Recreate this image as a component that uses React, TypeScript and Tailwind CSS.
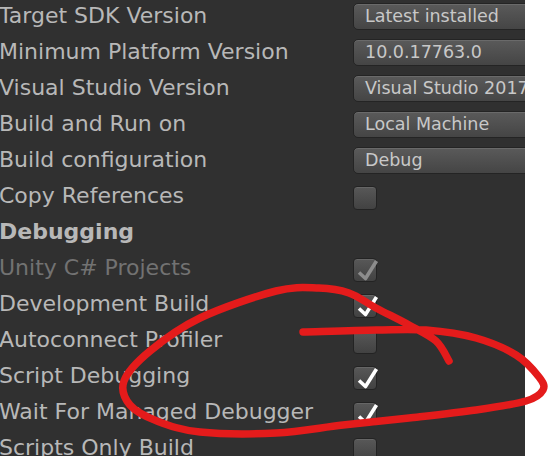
import React from "react";

type Row =
  | { kind: "select"; label: string; value: string }
  | { kind: "check"; label: string; checked: boolean; disabled?: boolean }
  | { kind: "header"; label: string };

const rows: Row[] = [
  { kind: "select", label: "Target SDK Version", value: "Latest installed" },
  { kind: "select", label: "Minimum Platform Version", value: "10.0.17763.0" },
  { kind: "select", label: "Visual Studio Version", value: "Visual Studio 2017" },
  { kind: "select", label: "Build and Run on", value: "Local Machine" },
  { kind: "select", label: "Build configuration", value: "Debug" },
  { kind: "check", label: "Copy References", checked: false },
  { kind: "header", label: "Debugging" },
  { kind: "check", label: "Unity C# Projects", checked: true, disabled: true },
  { kind: "check", label: "Development Build", checked: true },
  { kind: "check", label: "Autoconnect Profiler", checked: false },
  { kind: "check", label: "Script Debugging", checked: true },
  { kind: "check", label: "Wait For Managed Debugger", checked: true },
  { kind: "check", label: "Scripts Only Build", checked: false },
];

const font = { fontFamily: '"DejaVu Sans", Verdana, sans-serif' };

// hand-drawn red loop, traced from the screenshot
const loop: [number, number][] = [
  [303, 332], [376, 330], [426, 330], [476, 338], [516, 355], [539, 377], [543, 390],
  [526, 401], [476, 410], [409, 418], [343, 425], [276, 433], [200, 432], [157, 421],
  [130, 405], [124, 381], [150, 351], [200, 318], [276, 291], [319, 288], [349, 293],
  [376, 308], [409, 325], [436, 341], [449, 361],
];

const smoothPath = (pts: [number, number][]) => {
  let d = `M${pts[0][0]},${pts[0][1]}`;
  for (let i = 0; i < pts.length - 1; i++) {
    const p0 = pts[i - 1] || pts[i];
    const p1 = pts[i];
    const p2 = pts[i + 1];
    const p3 = pts[i + 2] || p2;
    const c1x = p1[0] + (p2[0] - p0[0]) / 6;
    const c1y = p1[1] + (p2[1] - p0[1]) / 6;
    const c2x = p2[0] - (p3[0] - p1[0]) / 6;
    const c2y = p2[1] - (p3[1] - p1[1]) / 6;
    d += ` C${c1x.toFixed(1)},${c1y.toFixed(1)} ${c2x.toFixed(1)},${c2y.toFixed(1)} ${p2[0]},${p2[1]}`;
  }
  return d;
};

const Checkbox = ({ checked, disabled }: { checked: boolean; disabled?: boolean }) => (
  <div className="relative mt-[4px] h-[24px] w-[24px] rounded-[4px] border border-[#232323] bg-gradient-to-b from-[#585858] to-[#424242] shadow-[inset_0_1px_0_#666]">
    {checked && (
      <svg className="absolute left-[-1px] top-[-3px]" width="27" height="27" viewBox="0 0 27 27">
        <path
          d="M6 16.5 L12.5 22.5 L23.5 5"
          fill="none"
          stroke={disabled ? "#8c8c8c" : "#ffffff"}
          strokeWidth="3.6"
          strokeLinejoin="round"
        />
      </svg>
    )}
  </div>
);

export default function App() {
  return (
    <div className="relative flex h-[456px] w-[552px] bg-white" style={font}>
      <div className="h-[456px] w-[525px] overflow-hidden bg-[#303030]">
        <div className="-ml-[1px] -mt-[2px] flex flex-col">
          {rows.map((r) => (
            <div key={r.label} className="flex h-[36px] items-center">
              <div
                className={
                  "mb-[2px] w-[354px] shrink-0 whitespace-nowrap text-[22px] " +
                  (r.kind === "header"
                    ? "font-bold text-[#b8b8b8]"
                    : r.kind === "check" && r.disabled
                    ? "text-[#727272]"
                    : "text-[#b8b8b8]")
                }
              >
                {r.label}
              </div>
              {r.kind === "select" && (
                <div className="h-[27px] w-[200px] shrink-0 rounded-[5px] border border-[#242424] bg-gradient-to-b from-[#5a5a5a] to-[#454545] pl-[11px] text-[17.5px] leading-[25px] text-[#c8c8c8] shadow-[inset_0_1px_0_#6a6a6a]">
                  <span className="whitespace-nowrap">{r.value}</span>
                </div>
              )}
              {r.kind === "check" && <Checkbox checked={r.checked} disabled={r.disabled} />}
            </div>
          ))}
        </div>
      </div>
      <svg className="pointer-events-none absolute left-0 top-0" width="552" height="456">
        <path d={smoothPath(loop)} fill="none" stroke="#e41b1b" strokeWidth="7.5" strokeLinecap="round" strokeLinejoin="round" />
      </svg>
    </div>
  );
}
